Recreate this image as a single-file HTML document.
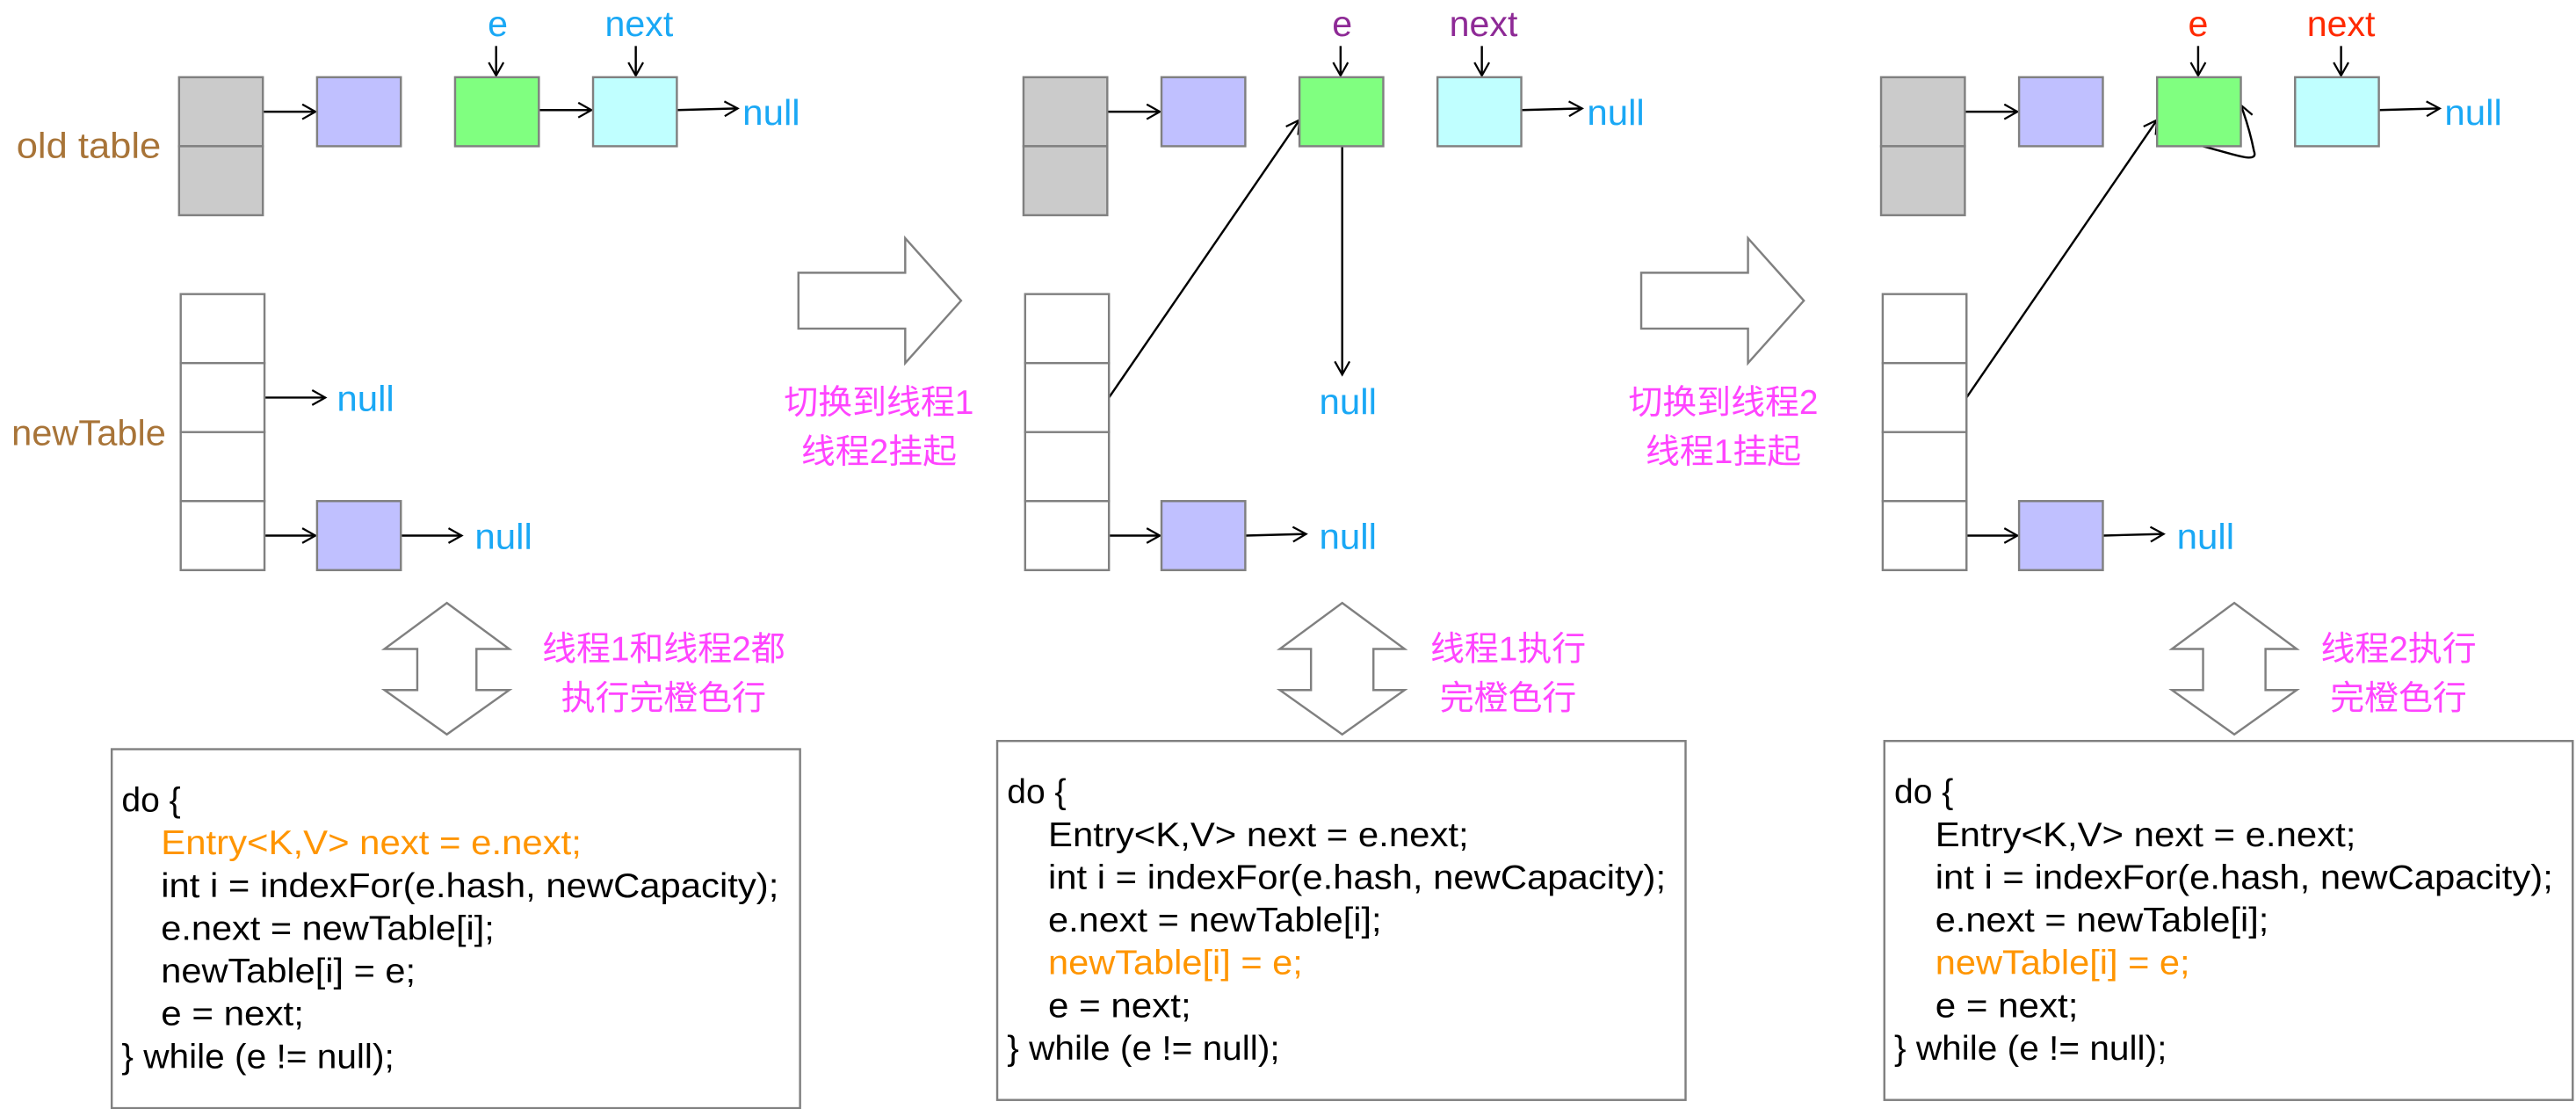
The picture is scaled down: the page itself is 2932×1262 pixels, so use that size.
<!DOCTYPE html>
<html><head><meta charset="utf-8"><style>
html,body{margin:0;padding:0;background:#fff;}
svg{display:block;}
text{font-family:"Liberation Sans","Noto Sans CJK SC",sans-serif;}
.cj{fill:#ff44ff;font-size:20.8px;text-anchor:middle;}
.nl{fill:#1aa8f5;font-size:22px;}
.cd{font-size:21px;fill:#000;}
.or{fill:#ff9500;}
</style></head><body>
<svg width="2932" height="1262" viewBox="0 0 1568 675" preserveAspectRatio="none" xmlns="http://www.w3.org/2000/svg">
<defs>
<marker id="a" markerUnits="userSpaceOnUse" markerWidth="12" markerHeight="12" refX="9" refY="5" orient="auto">
<path d="M1,0.5 L9,5 L1,9.5" fill="none" stroke="#000" stroke-width="1.2"/>
</marker>
</defs>
<g stroke="#000" stroke-width="1.3" fill="none" marker-end="url(#a)">
<line x1="160" y1="68" x2="192" y2="68"/>
<line x1="328" y1="67" x2="360" y2="67"/>
<line x1="412" y1="67" x2="449" y2="66"/>
<line x1="302" y1="28" x2="302" y2="46"/>
<line x1="387" y1="28" x2="387" y2="46"/>
<line x1="161" y1="242" x2="198" y2="242"/>
<line x1="161" y1="326" x2="192" y2="326"/>
<line x1="244" y1="326" x2="281" y2="326"/>
<line x1="674" y1="68" x2="706" y2="68"/>
<line x1="926" y1="67" x2="963" y2="66"/>
<line x1="816" y1="28" x2="816" y2="46"/>
<line x1="902" y1="28" x2="902" y2="46"/>
<line x1="675" y1="242" x2="791" y2="73"/>
<line x1="817" y1="89" x2="817" y2="228"/>
<line x1="675" y1="326" x2="706" y2="326"/>
<line x1="758" y1="326" x2="795" y2="325"/>
<line x1="1196" y1="68" x2="1228" y2="68"/>
<line x1="1448" y1="67" x2="1485" y2="66"/>
<line x1="1338" y1="28" x2="1338" y2="46"/>
<line x1="1425" y1="28" x2="1425" y2="46"/>
<line x1="1197" y1="242" x2="1313" y2="73"/>
<line x1="1197" y1="326" x2="1228" y2="326"/>
<line x1="1280" y1="326" x2="1317" y2="325"/>
<path d="M1341,89 C1360,94 1375,100 1372,92 C1370,82 1367,72 1364,64"/>
</g>
<g stroke="#808080" stroke-width="1.3">
<rect x="109" y="47" width="51" height="42" fill="#cbcbcb"/>
<rect x="109" y="89" width="51" height="42" fill="#cbcbcb"/>
<rect x="193" y="47" width="51" height="42" fill="#c0c0ff"/>
<rect x="277" y="47" width="51" height="42" fill="#80ff80"/>
<rect x="361" y="47" width="51" height="42" fill="#c0ffff"/>
<rect x="110" y="179" width="51" height="42" fill="#fff"/>
<rect x="110" y="221" width="51" height="42" fill="#fff"/>
<rect x="110" y="263" width="51" height="42" fill="#fff"/>
<rect x="110" y="305" width="51" height="42" fill="#fff"/>
<rect x="193" y="305" width="51" height="42" fill="#c0c0ff"/>
<rect x="623" y="47" width="51" height="42" fill="#cbcbcb"/>
<rect x="623" y="89" width="51" height="42" fill="#cbcbcb"/>
<rect x="707" y="47" width="51" height="42" fill="#c0c0ff"/>
<rect x="791" y="47" width="51" height="42" fill="#80ff80"/>
<rect x="875" y="47" width="51" height="42" fill="#c0ffff"/>
<rect x="624" y="179" width="51" height="42" fill="#fff"/>
<rect x="624" y="221" width="51" height="42" fill="#fff"/>
<rect x="624" y="263" width="51" height="42" fill="#fff"/>
<rect x="624" y="305" width="51" height="42" fill="#fff"/>
<rect x="707" y="305" width="51" height="42" fill="#c0c0ff"/>
<rect x="1145" y="47" width="51" height="42" fill="#cbcbcb"/>
<rect x="1145" y="89" width="51" height="42" fill="#cbcbcb"/>
<rect x="1229" y="47" width="51" height="42" fill="#c0c0ff"/>
<rect x="1313" y="47" width="51" height="42" fill="#80ff80"/>
<rect x="1397" y="47" width="51" height="42" fill="#c0ffff"/>
<rect x="1146" y="179" width="51" height="42" fill="#fff"/>
<rect x="1146" y="221" width="51" height="42" fill="#fff"/>
<rect x="1146" y="263" width="51" height="42" fill="#fff"/>
<rect x="1146" y="305" width="51" height="42" fill="#fff"/>
<rect x="1229" y="305" width="51" height="42" fill="#c0c0ff"/>
<path d="M486,166 L551,166 L551,145 L585,183 L551,221 L551,200 L486,200 Z" fill="#fff"/>
<path d="M999,166 L1064,166 L1064,145 L1098,183 L1064,221 L1064,200 L999,200 Z" fill="#fff"/>
<path d="M272,367 L310,395 L290,395 L290,420 L310,420 L272,447 L234,420 L254,420 L254,395 L234,395 Z" fill="#fff"/>
<path d="M817,367 L855,395 L836,395 L836,420 L855,420 L817,447 L779,420 L798,420 L798,395 L779,395 Z" fill="#fff"/>
<path d="M1360,367 L1398,395 L1379,395 L1379,420 L1398,420 L1360,447 L1322,420 L1341,420 L1341,395 L1322,395 Z" fill="#fff"/>
<rect x="68" y="456" width="419" height="218.5" fill="#fff"/>
<rect x="607" y="451" width="419" height="218.5" fill="#fff"/>
<rect x="1147" y="451" width="419" height="218.5" fill="#fff"/>
</g>
<text x="10" y="96" font-size="22" fill="#a87438" textLength="88" lengthAdjust="spacingAndGlyphs">old table</text>
<text x="7" y="271" font-size="22" fill="#a87438" textLength="94" lengthAdjust="spacingAndGlyphs">newTable</text>
<g class="nl">
<text x="452" y="76" textLength="35" lengthAdjust="spacingAndGlyphs">null</text><text x="205" y="250" textLength="35" lengthAdjust="spacingAndGlyphs">null</text><text x="289" y="334" textLength="35" lengthAdjust="spacingAndGlyphs">null</text>
<text x="966" y="76" textLength="35" lengthAdjust="spacingAndGlyphs">null</text><text x="803" y="252" textLength="35" lengthAdjust="spacingAndGlyphs">null</text><text x="803" y="334" textLength="35" lengthAdjust="spacingAndGlyphs">null</text>
<text x="1488" y="76" textLength="35" lengthAdjust="spacingAndGlyphs">null</text><text x="1325" y="334" textLength="35" lengthAdjust="spacingAndGlyphs">null</text>
</g>
<g font-size="22" text-anchor="middle">
<text x="303" y="22" fill="#1aa8f5">e</text><text x="389" y="22" fill="#1aa8f5">next</text>
<text x="817" y="22" fill="#8e2a96">e</text><text x="903" y="22" fill="#8e2a96">next</text>
<text x="1338" y="22" fill="#ff2a00">e</text><text x="1425" y="22" fill="#ff2a00">next</text>
</g>
<g class="cj">
<text x="535" y="252">切换到线程1</text><text x="535" y="282">线程2挂起</text>
<text x="1049" y="252">切换到线程2</text><text x="1049" y="282">线程1挂起</text>
<text x="404" y="402">线程1和线程2都</text><text x="404" y="432">执行完橙色行</text>
<text x="918" y="402">线程1执行</text><text x="918" y="432">完橙色行</text>
<text x="1460" y="402">线程2执行</text><text x="1460" y="432">完橙色行</text>
</g>
<g class="cd">
<text x="74" y="494" textLength="36" lengthAdjust="spacingAndGlyphs">do {</text>
<text x="98" y="520" class="or" textLength="256" lengthAdjust="spacingAndGlyphs">Entry&lt;K,V&gt; next = e.next;</text>
<text x="98" y="546" textLength="376" lengthAdjust="spacingAndGlyphs">int i = indexFor(e.hash, newCapacity);</text>
<text x="98" y="572" textLength="203" lengthAdjust="spacingAndGlyphs">e.next = newTable[i];</text>
<text x="98" y="598" textLength="155" lengthAdjust="spacingAndGlyphs">newTable[i] = e;</text>
<text x="98" y="624" textLength="87" lengthAdjust="spacingAndGlyphs">e = next;</text>
<text x="74" y="650" textLength="166" lengthAdjust="spacingAndGlyphs">} while (e != null);</text>
</g>
<g class="cd">
<text x="613" y="489" textLength="36" lengthAdjust="spacingAndGlyphs">do {</text>
<text x="638" y="515" textLength="256" lengthAdjust="spacingAndGlyphs">Entry&lt;K,V&gt; next = e.next;</text>
<text x="638" y="541" textLength="376" lengthAdjust="spacingAndGlyphs">int i = indexFor(e.hash, newCapacity);</text>
<text x="638" y="567" textLength="203" lengthAdjust="spacingAndGlyphs">e.next = newTable[i];</text>
<text x="638" y="593" class="or" textLength="155" lengthAdjust="spacingAndGlyphs">newTable[i] = e;</text>
<text x="638" y="619" textLength="87" lengthAdjust="spacingAndGlyphs">e = next;</text>
<text x="613" y="645" textLength="166" lengthAdjust="spacingAndGlyphs">} while (e != null);</text>
</g>
<g class="cd">
<text x="1153" y="489" textLength="36" lengthAdjust="spacingAndGlyphs">do {</text>
<text x="1178" y="515" textLength="256" lengthAdjust="spacingAndGlyphs">Entry&lt;K,V&gt; next = e.next;</text>
<text x="1178" y="541" textLength="376" lengthAdjust="spacingAndGlyphs">int i = indexFor(e.hash, newCapacity);</text>
<text x="1178" y="567" textLength="203" lengthAdjust="spacingAndGlyphs">e.next = newTable[i];</text>
<text x="1178" y="593" class="or" textLength="155" lengthAdjust="spacingAndGlyphs">newTable[i] = e;</text>
<text x="1178" y="619" textLength="87" lengthAdjust="spacingAndGlyphs">e = next;</text>
<text x="1153" y="645" textLength="166" lengthAdjust="spacingAndGlyphs">} while (e != null);</text>
</g>
</svg>
</body></html>
